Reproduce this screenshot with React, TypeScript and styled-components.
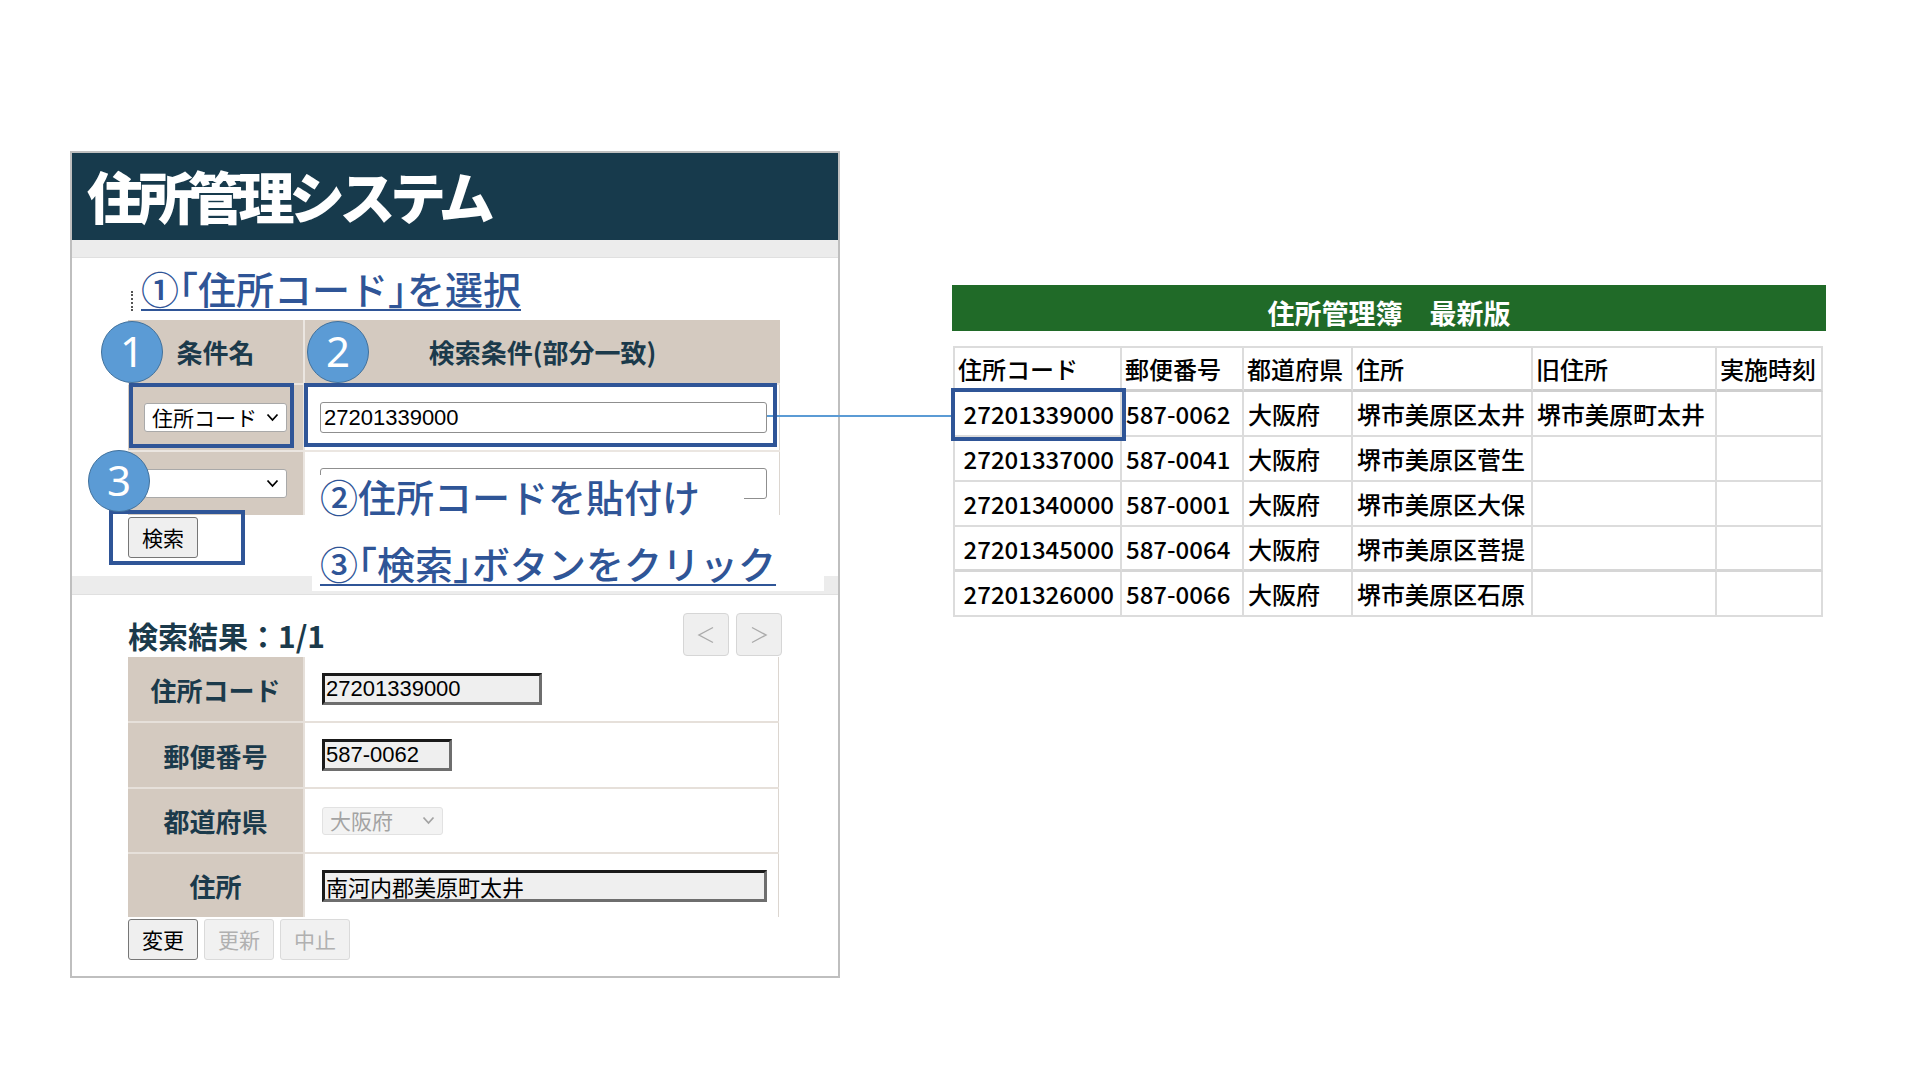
import React from "react";
import styled, { createGlobalStyle, css } from "styled-components";

const GlobalStyle = createGlobalStyle`
  html, body { margin: 0; padding: 0; background: #fff; }
  body { font-family: "Noto Sans CJK JP", "Noto Sans", sans-serif; }
  * { box-sizing: border-box; }
`;

const INK = "#1b3a4b";
const BLUE = "#2f5597";
const BEIGE = "#d4cac0";

const Page = styled.div`
  position: relative;
  width: 1920px;
  height: 1080px;
  display: flex;
  align-items: flex-start;
  padding: 151px 0 0 70px;
  overflow: hidden;
`;

const Panel = styled.div`
  width: 770px;
  height: 827px;
  border: 2px solid #bfbfbf;
  display: flex;
  flex-direction: column;
  background: #fff;
`;

const Header = styled.div`
  height: 87px;
  background: #173a4c;
  display: flex;
  align-items: center;
  padding-left: 15px;
`;

const Title = styled.h1`
  margin: 0;
  color: #fff;
  font-size: 56px;
  font-weight: 900;
  line-height: 1;
  letter-spacing: -5.5px;
  padding-bottom: 3px;
`;

const Band = styled.div<{ $h: number }>`
  height: ${(p) => p.$h}px;
  background: #ececec;
  border-bottom: 1px solid #e0e0e0;
  flex: none;
`;

const SearchSection = styled.div`
  height: 318px;
  padding-left: 56px;
  flex: none;
`;

const noteText = css`
  font-size: 38px;
  font-weight: 500;
  line-height: 1;
  color: ${BLUE};
  white-space: nowrap;
  font-feature-settings: "halt";
`;

const underline = css`
  text-decoration: underline;
  text-decoration-thickness: 2px;
  text-underline-offset: 5px;
`;

const StepTitle = styled.div`
  position: relative;
  height: 62px;
  padding: 11px 0 0 13px;
  ${noteText}
  span {
    ${underline}
  }
  &::before {
    content: "";
    position: absolute;
    left: 3px;
    top: 33px;
    height: 20px;
    border-left: 2px dotted #555;
  }
`;

const CondGrid = styled.div`
  position: relative;
  display: grid;
  grid-template-columns: 175px 475px;
  grid-template-rows: 63px 65px 63px;
  gap: 2px;
  width: 652px;
  background: #ebe6e1;
`;

const HeadCell = styled.div`
  background: ${BEIGE};
  display: flex;
  align-items: center;
  justify-content: center;
  color: ${INK};
  font-size: 26px;
  font-weight: 700;
  white-space: nowrap;
`;

const LabelCell = styled.div`
  background: ${BEIGE};
  display: flex;
  align-items: center;
  justify-content: center;
  color: ${INK};
  font-size: 26px;
  font-weight: 700;
`;

const ValueCell = styled.div<{ $pl?: number }>`
  background: #fff;
  display: flex;
  align-items: center;
  padding-left: ${(p) => p.$pl ?? 15}px;
  box-shadow: inset -1px 0 0 #dcd6d0;
`;

const SelectBox = styled.div<{ $disabled?: boolean; $w: number; $h: number }>`
  width: ${(p) => p.$w}px;
  height: ${(p) => p.$h}px;
  display: flex;
  align-items: center;
  justify-content: space-between;
  padding: 0 7px 0 7px;
  border: 1px solid ${(p) => (p.$disabled ? "#e2e2e2" : "#a9a9a9")};
  border-radius: 3px;
  background: ${(p) => (p.$disabled ? "#f3f3f3" : "#fff")};
  color: ${(p) => (p.$disabled ? "#a3a3a3" : "#000")};
  font-size: 21px;
  font-weight: 400;
  line-height: 1;
  white-space: nowrap;
  svg { flex: none; }
`;

const TextInput = styled.input`
  width: 447px;
  height: 31px;
  border: 1px solid #8f8f8f;
  border-radius: 3px;
  background: #fff;
  padding: 0 3px;
  font-family: "Liberation Sans", "Noto Sans CJK JP", sans-serif;
  font-size: 22px;
  color: #000;
  outline: none;
`;

const ResultInput = styled.input<{ $w: number }>`
  width: ${(p) => p.$w}px;
  height: 32px;
  border-style: solid;
  border-width: 3px;
  border-color: #1a1a1a #6e6e6e #6e6e6e #1a1a1a;
  background: #efefef;
  padding: 0 1px;
  font-family: "Liberation Sans", "Noto Sans CJK JP", sans-serif;
  font-size: 22px;
  color: #000;
  outline: none;
`;

const ButtonRow = styled.div<{ $mt: number }>`
  display: flex;
  gap: 6px;
  margin-top: ${(p) => p.$mt}px;
`;

const Button = styled.button<{ $disabled?: boolean }>`
  width: 70px;
  height: 41px;
  padding: 0;
  border: 1px solid ${(p) => (p.$disabled ? "#dadada" : "#767676")};
  border-radius: 3px;
  background: ${(p) => (p.$disabled ? "#f1f1f1" : "#efefef")};
  color: ${(p) => (p.$disabled ? "#b0b0b0" : "#000")};
  font-family: "Noto Sans CJK JP", sans-serif;
  font-size: 21px;
  line-height: 1;
`;

const Highlight = styled.div<{ $left: number; $top: number; $w: number; $h: number }>`
  position: absolute;
  left: ${(p) => p.$left}px;
  top: ${(p) => p.$top}px;
  width: ${(p) => p.$w}px;
  height: ${(p) => p.$h}px;
  border: 4px solid ${BLUE};
  z-index: 2;
  pointer-events: none;
`;

const Badge = styled.div<{ $left: number; $top: number }>`
  position: absolute;
  left: ${(p) => p.$left}px;
  top: ${(p) => p.$top}px;
  width: 62px;
  height: 62px;
  border-radius: 50%;
  background: #5b9bd5;
  border: 1.5px solid #41719c;
  color: #fff;
  font-family: "Noto Sans", "Open Sans", sans-serif;
  font-size: 42px;
  line-height: 1;
  display: flex;
  align-items: center;
  justify-content: center;
  padding-bottom: 2px;
  z-index: 3;
`;

const Note = styled.div<{ $left: number; $top: number; $pad: string }>`
  position: absolute;
  left: ${(p) => p.$left}px;
  top: ${(p) => p.$top}px;
  padding: ${(p) => p.$pad};
  background: #fff;
  z-index: 1;
  ${noteText}
  ${underline}
`;

const ResultSection = styled.div`
  flex: 1;
  padding: 18px 0 0 56px;
`;

const TitleRow = styled.div`
  width: 654px;
  height: 44px;
  display: flex;
  align-items: center;
  justify-content: space-between;
`;

const ResultTitle = styled.h2`
  margin: 0;
  font-size: 30px;
  font-weight: 700;
  line-height: 1;
  color: ${INK};
`;

const NavGroup = styled.div`
  display: flex;
  gap: 7px;
  align-self: flex-start;
`;

const NavButton = styled.div`
  width: 46px;
  height: 43px;
  border: 1px solid #d6d6d6;
  border-radius: 4px;
  background: #efefef;
  display: flex;
  align-items: center;
  justify-content: center;
`;

const ResultGrid = styled.div`
  display: grid;
  grid-template-columns: 175px 474px;
  grid-template-rows: 64px 64px 63px 63px;
  gap: 2px;
  width: 651px;
  background: #e6e0da;
`;

const RightBlock = styled.div`
  margin: 134px 0 0 112px;
  width: 874px;
`;

const GreenBar = styled.div`
  height: 46px;
  background: #206a28;
  color: #fff;
  font-size: 27px;
  font-weight: 700;
  line-height: 1;
  display: flex;
  align-items: center;
  justify-content: center;
  padding-top: 8px;
  white-space: pre;
`;

const Sheet = styled.div`
  margin: 15px 0 0 1px;
  width: 870px;
  display: grid;
  grid-template-columns: 167px 122px 109px 180px 184px 106px;
  grid-template-rows: 44px repeat(5, 45px);
  border-top: 2px solid #dcdcdc;
  border-left: 2px solid #dcdcdc;
`;

const SheetCell = styled.div<{ $head?: boolean; $num?: boolean; $thick?: boolean; $mark?: boolean }>`
  position: relative;
  border-right: 2px solid #dcdcdc;
  border-bottom: ${(p) =>
    p.$head ? "3px solid #cfcfcf" : p.$thick ? "3px solid #d6d6d6" : "2px solid #dcdcdc"};
  display: flex;
  align-items: center;
  justify-content: ${(p) => (p.$num ? "flex-end" : "flex-start")};
  padding: 0 ${(p) => (p.$num ? 6 : 4)}px 0 ${(p) => (p.$head ? 3 : 4)}px;
  font-size: 24px;
  font-weight: 500;
  color: #000;
  white-space: nowrap;
  ${(p) =>
    p.$mark &&
    css`
      outline: 4px solid ${BLUE};
      z-index: 2;
    `}
`;

const Connector = styled.div`
  position: absolute;
  left: 767px;
  top: 415px;
  width: 185px;
  height: 2px;
  background: #5b9bd5;
`;

const Chevron = ({ color = "#000" }: { color?: string }) => (
  <svg width="13" height="9" viewBox="0 0 13 9">
    <polyline points="1.5,1.5 6.5,7 11.5,1.5" fill="none" stroke={color} strokeWidth="1.8" />
  </svg>
);

const Arrow = ({ dir }: { dir: "l" | "r" }) => (
  <svg width="18" height="18" viewBox="0 0 18 18">
    <polyline
      points={dir === "l" ? "16,1.5 2,9 16,16.5" : "2,1.5 16,9 2,16.5"}
      fill="none"
      stroke="#ababab"
      strokeWidth="1.4"
    />
  </svg>
);

const rows: string[][] = [
  ["27201339000", "587-0062", "大阪府", "堺市美原区太井", "堺市美原町太井", ""],
  ["27201337000", "587-0041", "大阪府", "堺市美原区菅生", "", ""],
  ["27201340000", "587-0001", "大阪府", "堺市美原区大保", "", ""],
  ["27201345000", "587-0064", "大阪府", "堺市美原区菩提", "", ""],
  ["27201326000", "587-0066", "大阪府", "堺市美原区石原", "", ""],
];

const heads = ["住所コード", "郵便番号", "都道府県", "住所", "旧住所", "実施時刻"];

export default function App() {
  return (
    <>
      <GlobalStyle />
      <Page>
        <Panel>
          <Header>
            <Title>住所管理システム</Title>
          </Header>
          <Band $h={18} />
          <SearchSection>
            <StepTitle>
              <span>①「住所コード」を選択</span>
            </StepTitle>
            <CondGrid>
              <HeadCell>条件名</HeadCell>
              <HeadCell>検索条件(部分一致)</HeadCell>
              <LabelCell>
                <SelectBox $w={143} $h={29}>
                  <span>住所コード</span>
                  <Chevron />
                </SelectBox>
              </LabelCell>
              <ValueCell>
                <TextInput readOnly value="27201339000" />
              </ValueCell>
              <LabelCell>
                <SelectBox $w={143} $h={29}>
                  <span />
                  <Chevron />
                </SelectBox>
              </LabelCell>
              <ValueCell>
                <TextInput readOnly value="" />
              </ValueCell>

              <Highlight $left={1} $top={63} $w={165} $h={65} />
              <Highlight $left={176} $top={63} $w={473} $h={64} />
              <Highlight $left={-19} $top={190} $w={136} $h={55} />

              <Badge $left={-27} $top={1}>1</Badge>
              <Badge $left={179} $top={1}>2</Badge>
              <Badge $left={-40} $top={130}>3</Badge>

              <Note $left={188} $top={155} $pad="2px 44px 6px 4px">②住所コードを貼付け</Note>
              <Note $left={184} $top={197} $pad="27px 48px 9px 8px">③「検索」ボタンをクリック</Note>
            </CondGrid>
            <ButtonRow $mt={2}>
              <Button>検索</Button>
            </ButtonRow>
          </SearchSection>
          <Band $h={19} />
          <ResultSection>
            <TitleRow>
              <ResultTitle>検索結果：1/1</ResultTitle>
              <NavGroup>
                <NavButton>
                  <Arrow dir="l" />
                </NavButton>
                <NavButton>
                  <Arrow dir="r" />
                </NavButton>
              </NavGroup>
            </TitleRow>
            <ResultGrid>
              <LabelCell>住所コード</LabelCell>
              <ValueCell $pl={17}>
                <ResultInput $w={220} readOnly value="27201339000" />
              </ValueCell>
              <LabelCell>郵便番号</LabelCell>
              <ValueCell $pl={17}>
                <ResultInput $w={130} readOnly value="587-0062" />
              </ValueCell>
              <LabelCell>都道府県</LabelCell>
              <ValueCell $pl={17}>
                <SelectBox $disabled $w={121} $h={28}>
                  <span>大阪府</span>
                  <Chevron color="#a3a3a3" />
                </SelectBox>
              </ValueCell>
              <LabelCell>住所</LabelCell>
              <ValueCell $pl={17}>
                <ResultInput $w={445} readOnly value="南河内郡美原町太井" />
              </ValueCell>
            </ResultGrid>
            <ButtonRow $mt={2}>
              <Button>変更</Button>
              <Button $disabled>更新</Button>
              <Button $disabled>中止</Button>
            </ButtonRow>
          </ResultSection>
        </Panel>

        <RightBlock>
          <GreenBar>住所管理簿　最新版</GreenBar>
          <Sheet>
            {heads.map((h) => (
              <SheetCell key={h} $head>
                {h}
              </SheetCell>
            ))}
            {rows.map((r, i) =>
              r.map((c, j) => (
                <SheetCell
                  key={`${i}-${j}`}
                  $num={j === 0}
                  $thick={i === 3}
                  $mark={i === 0 && j === 0}
                >
                  {c}
                </SheetCell>
              ))
            )}
          </Sheet>
        </RightBlock>

        <Connector />
      </Page>
    </>
  );
}
